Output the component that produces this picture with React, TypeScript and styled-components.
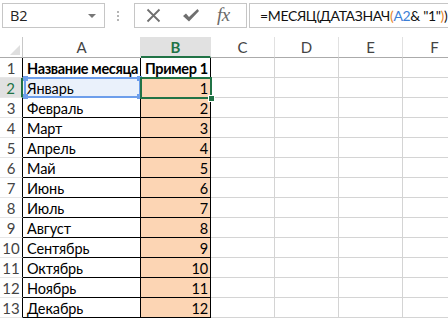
import React from 'react';
import styled, { createGlobalStyle, css } from 'styled-components';

const GlobalStyle = createGlobalStyle`
  html, body { margin: 0; padding: 0; background: #fff; }
  body { width: 448px; height: 319px; overflow: hidden; font-family: Lato, 'Liberation Sans', sans-serif; }
  * { box-sizing: border-box; }
`;

const GREEN = '#217346';
const GRID = '#d4d4d4';

const Page = styled.div`
  width: 448px;
  height: 319px;
  overflow: hidden;
  background: #fff;
`;

const Toolbar = styled.div`
  display: flex;
  align-items: center;
  height: 37px;
  padding: 3px 0 9px 2px;
  overflow: hidden;
`;

const NameBox = styled.div`
  flex-shrink: 0;
  width: 103px;
  height: 25px;
  border: 1px solid #c6c6c6;
  display: flex;
  align-items: center;
  padding-left: 7px;
  font: 14.5px 'Open Sans', 'Liberation Sans', sans-serif;
  color: #222;
`;

const DropArrow = styled.span`
  margin-left: auto;
  margin-right: 8px;
  width: 0;
  height: 0;
  border-left: 4px solid transparent;
  border-right: 4px solid transparent;
  border-top: 4px solid #777;
`;

const Grip = styled.div`
  flex-shrink: 0;
  margin-left: 12px;
  width: 2px;
  height: 12px;
  background: radial-gradient(circle, #b5b5b5 1px, transparent 1px) 0 0 / 2px 4px;
`;

const ButtonBox = styled.div`
  flex-shrink: 0;
  margin-left: 15px;
  width: 113px;
  height: 25px;
  border: 1px solid #c6c6c6;
  display: flex;
  align-items: center;
  padding-left: 11px;
  gap: 21px;
  color: #707070;
`;

const FxText = styled.span`
  font: italic 19px 'Liberation Serif', serif;
  color: #6a6a6a;
  letter-spacing: -0.5px;
  margin-top: -2px;
  margin-left: -4px;
`;

const FormulaBox = styled.div`
  flex-shrink: 0;
  margin-left: 2px;
  width: 240px;
  height: 25px;
  border: 1px solid #c6c6c6;
  border-right: none;
  display: flex;
  align-items: center;
  padding-left: 10px;
  white-space: nowrap;
  font: 14px Lato, 'Liberation Sans', sans-serif;
  letter-spacing: -0.35px;
  color: #111;
`;

const Tok = styled.span<{ $c?: string }>`
  color: ${(p) => p.$c || 'inherit'};
  white-space: pre;
`;

const Sheet = styled.div`
  display: grid;
  grid-template-columns: 23px 118px 70px 64px 64px 64px 64px;
  grid-template-rows: 21px repeat(13, 20px);
  width: 467px;
`;

const Corner = styled.div`
  position: relative;
  border-right: 1px solid #c8c8c8;
  border-bottom: 1px solid #ababab;
  &::after {
    content: '';
    position: absolute;
    right: 2px;
    bottom: 2px;
    border-left: 10px solid transparent;
    border-bottom: 10px solid #dfdfdf;
  }
`;

const ColHead = styled.div<{ $active?: boolean }>`
  display: flex;
  align-items: center;
  justify-content: center;
  border-right: 1px solid #e1e1e1;
  border-bottom: 1px solid #ababab;
  font-size: 15px;
  color: #444;
  ${(p) =>
    p.$active &&
    css`
      background: #e1e1e1;
      color: ${GREEN};
      font-weight: 700;
      border-bottom: 2px solid ${GREEN};
      padding-top: 1px;
    `}
`;

const RowHead = styled.div<{ $active?: boolean }>`
  display: flex;
  align-items: center;
  justify-content: center;
  border-right: 1px solid #000;
  border-bottom: 1px solid #e6e6e6;
  font-size: 15px;
  color: #444;
  ${(p) =>
    p.$active &&
    css`
      background: #e1e1e1;
      color: ${GREEN};
      border-right: 2px solid ${GREEN};
    `}
`;

const Cell = styled.div<{ $boxed?: boolean; $fill?: string; $right?: boolean; $bold?: boolean }>`
  position: relative;
  display: flex;
  align-items: center;
  justify-content: ${(p) => (p.$right ? 'flex-end' : 'flex-start')};
  padding: 1px 2px 0 4px;
  border-right: 1px solid ${(p) => (p.$boxed ? '#000' : GRID)};
  border-bottom: 1px solid ${(p) => (p.$boxed ? '#000' : GRID)};
  background: ${(p) => p.$fill || '#fff'};
  font-size: 14.5px;
  letter-spacing: ${(p) => (p.$bold ? '-0.35px' : '-0.1px')};
  font-weight: ${(p) => (p.$bold ? 700 : 400)};
  color: #000;
  white-space: nowrap;
`;

const Selection = styled.div`
  position: absolute;
  top: -1px;
  left: -1px;
  right: -2px;
  bottom: -2px;
  border: 2px solid ${GREEN};
  z-index: 3;
  pointer-events: none;
`;

const FillHandle = styled.div`
  position: absolute;
  right: -5px;
  bottom: -5px;
  width: 7px;
  height: 7px;
  background: ${GREEN};
  border: 1px solid #fff;
`;

const RefRange = styled.div`
  position: absolute;
  top: -1px;
  left: 1px;
  right: -1px;
  bottom: -1px;
  border: 2px solid #6d9eeb;
  z-index: 2;
  pointer-events: none;
`;

const RefKnob = styled.span<{ $pos: string }>`
  position: absolute;
  width: 5px;
  height: 5px;
  background: #6d9eeb;
  ${(p) => (p.$pos.includes('t') ? 'top: -3px;' : 'bottom: -3px;')}
  ${(p) => (p.$pos.includes('l') ? 'left: -3px;' : 'right: -3px;')}
`;

const months = [
  'Январь', 'Февраль', 'Март', 'Апрель', 'Май', 'Июнь',
  'Июль', 'Август', 'Сентябрь', 'Октябрь', 'Ноябрь', 'Декабрь',
];

const PEACH = '#fcd5b4';
const extraCols = ['C', 'D', 'E', 'F'];

export default function App() {
  return (
    <Page>
      <GlobalStyle />
      <Toolbar>
        <NameBox>
          B2
          <DropArrow />
        </NameBox>
        <Grip />
        <ButtonBox>
          <svg width="15" height="15" viewBox="0 0 15 15">
            <path d="M1.5 1.5 L13.5 13.5 M13.5 1.5 L1.5 13.5" stroke="#6f6f6f" strokeWidth="1.8" fill="none" />
          </svg>
          <svg width="18" height="15" viewBox="0 0 18 15">
            <path d="M1 8 L4 5.5 L7 9 L15.5 1 L17 3 L7 13.5 Z" fill="#6f6f6f" />
          </svg>
          <FxText>fx</FxText>
        </ButtonBox>
        <FormulaBox>
          =МЕСЯЦ(ДАТАЗНАЧ<Tok $c="#e8862a">(</Tok>
          <Tok $c="#3c7fd6">A2</Tok>
          <Tok>&amp; "1"</Tok>
          <Tok $c="#e8862a">)</Tok>)
        </FormulaBox>
      </Toolbar>
      <Sheet>
        <Corner />
        <ColHead>A</ColHead>
        <ColHead $active>B</ColHead>
        {extraCols.map((c) => (
          <ColHead key={c}>{c}</ColHead>
        ))}

        <RowHead>1</RowHead>
        <Cell $boxed $bold>Название месяца</Cell>
        <Cell $boxed $bold>Пример 1</Cell>
        {extraCols.map((c) => (
          <Cell key={c} />
        ))}

        {months.map((m, i) => {
          const row = i + 2;
          const active = row === 2;
          return (
            <React.Fragment key={m}>
              <RowHead $active={active}>{row}</RowHead>
              <Cell $boxed $fill={active ? '#eaf1fb' : undefined}>
                {m}
                {active && (
                  <RefRange>
                    <RefKnob $pos="tl" />
                    <RefKnob $pos="tr" />
                    <RefKnob $pos="bl" />
                    <RefKnob $pos="br" />
                  </RefRange>
                )}
              </Cell>
              <Cell $boxed $right $fill={PEACH}>
                {i + 1}
                {active && (
                  <Selection>
                    <FillHandle />
                  </Selection>
                )}
              </Cell>
              {extraCols.map((c) => (
                <Cell key={c} />
              ))}
            </React.Fragment>
          );
        })}
      </Sheet>
    </Page>
  );
}
